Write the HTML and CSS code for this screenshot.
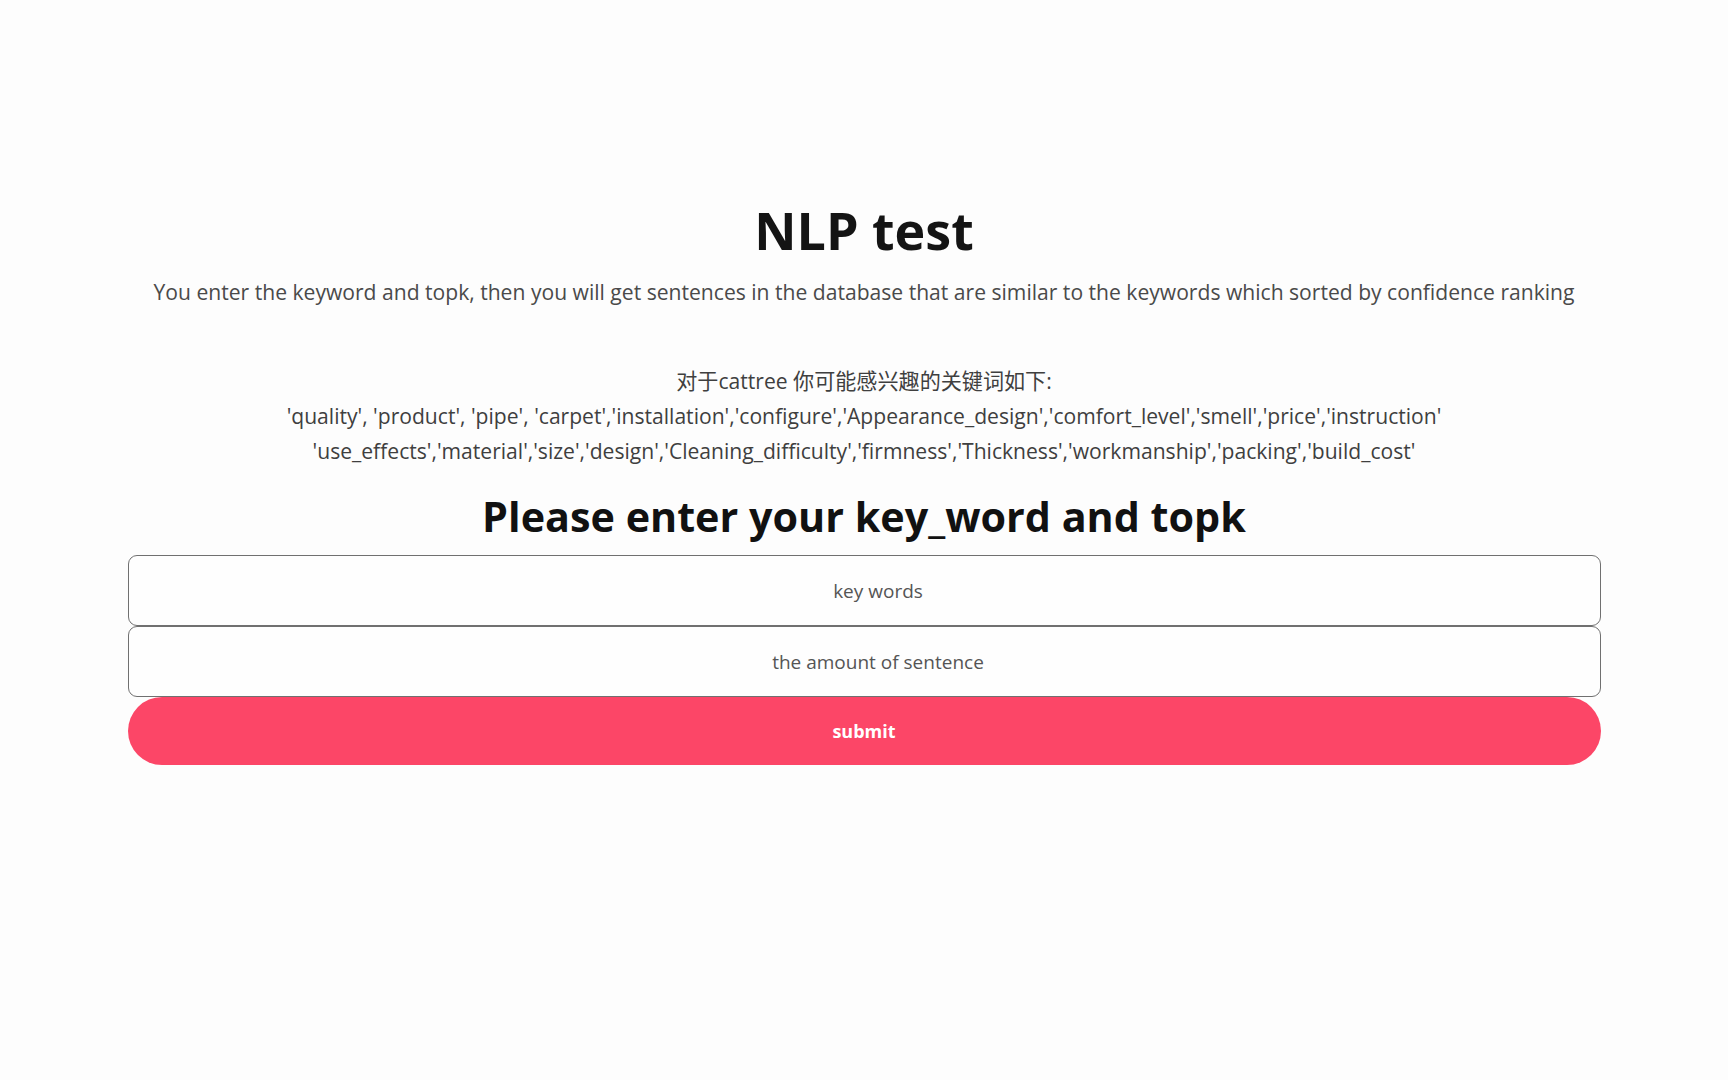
FILE: index.html
```html
<!DOCTYPE html>
<html lang="en">
<head>
<meta charset="utf-8">
<title>NLP test</title>
<link rel="stylesheet" href="styles.css">
</head>
<body>
<main class="page">
  <h1 class="title">NLP test</h1>
  <p class="desc">You enter the keyword and topk, then you will get sentences in the database that are similar to the keywords which sorted by confidence ranking</p>
  <div class="keywords">
    <div class="kw-line">对于cattree 你可能感兴趣的关键词如下:</div>
    <div class="kw-line">'quality', 'product', 'pipe', 'carpet','installation','configure','Appearance_design','comfort_level','smell','price','instruction'</div>
    <div class="kw-line">'use_effects','material','size','design','Cleaning_difficulty','firmness','Thickness','workmanship','packing','build_cost'</div>
  </div>
  <h2 class="subtitle">Please enter your key_word and topk</h2>
  <form class="form">
    <input class="field" type="text" placeholder="key words">
    <input class="field" type="text" placeholder="the amount of sentence">
    <button class="submit" type="button">submit</button>
  </form>
</main>
</body>
</html>
```

FILE: styles.css
```css
html, body {
  margin: 0;
  padding: 0;
  background: #fdfdfd;
}
body {
  font-family: "Open Sans", "Noto Sans CJK SC", sans-serif;
  color: #333;
}
.page {
  display: flex;
  flex-direction: column;
  align-items: center;
  padding-top: 190px;
}
.title {
  margin: 0;
  font-size: 52px;
  line-height: 79px;
  font-weight: 700;
  color: #141414;
}
.desc {
  margin: 9px 0 0;
  font-size: 21.1px;
  line-height: 28px;
  color: #4a4a4a;
  text-align: center;
}
.keywords {
  margin-top: 57px;
  display: flex;
  flex-direction: column;
  align-items: center;
  font-size: 21.1px;
  line-height: 35px;
  color: #3f3f3f;
}
.subtitle {
  margin: 20px 0 0;
  font-size: 41.3px;
  line-height: 56px;
  font-weight: 700;
  color: #111;
}
.form {
  margin-top: 11px;
  width: 1473px;
  display: flex;
  flex-direction: column;
}
.field {
  box-sizing: border-box;
  height: 71px;
  border: 1px solid #707070;
  border-radius: 9px;
  background: #fefefe;
  font-family: "Open Sans", sans-serif;
  font-size: 19px;
  color: #444;
  text-align: center;
  padding: 0 0 0 28px;
  outline: none;
}
.field::placeholder {
  color: #555;
}
.submit {
  height: 68px;
  border: none;
  border-radius: 34px;
  background: #fc4667;
  color: #fff;
  font-family: "Open Sans", sans-serif;
  font-weight: 700;
  font-size: 18px;
  cursor: pointer;
}
```
